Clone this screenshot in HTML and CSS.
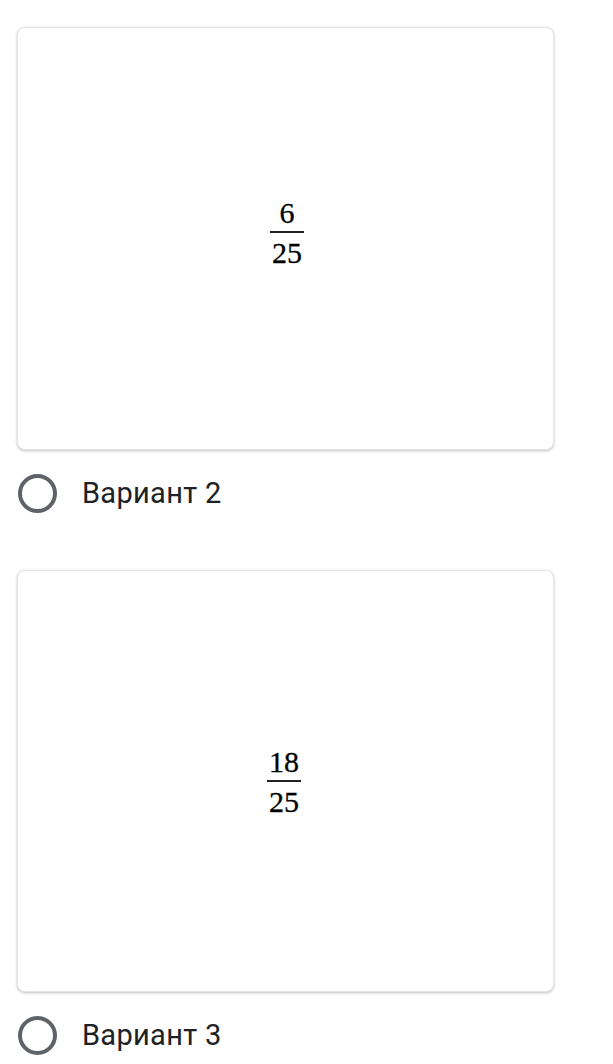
FILE: index.html
```html
<!DOCTYPE html>
<html lang="ru">
<head>
    <meta charset="UTF-8">
    <meta name="viewport" content="width=device-width, initial-scale=1.0">
    <title>Варианты</title>
    <link rel="stylesheet" href="styles.css">
</head>
<body>

    <div class="options">
        <!-- Option 2 -->
        <div class="option">
            <div class="card card-first">
                <div class="frac">
                    <span class="num">6</span>
                    <span class="den">25</span>
                </div>
            </div>
            <label class="choice">
                <span class="radio"></span>
                <span class="choice-text">Вариант 2</span>
            </label>
        </div>

        <!-- Option 3 -->
        <div class="option">
            <div class="card card-second">
                <div class="frac">
                    <span class="num">18</span>
                    <span class="den">25</span>
                </div>
            </div>
            <label class="choice">
                <span class="radio"></span>
                <span class="choice-text">Вариант 3</span>
            </label>
        </div>
    </div>

</body>
</html>
```

FILE: styles.css
```css
body {
    margin: 0;
    padding: 0;
    background: #ffffff;
    font-family: 'Roboto', 'Liberation Sans', sans-serif;
    color: #202124;
}
.options {
    padding: 27px 0 0 17px;
    width: 537px;
}
.option {
    margin-bottom: 58px;
}
.card {
    box-sizing: border-box;
    height: 423px;
    background: #fff;
    border: 1px solid #e6e6e6;
    border-radius: 8px;
    box-shadow: 0 1px 3px rgba(0, 0, 0, 0.25);
    display: flex;
    justify-content: center;
    align-items: center;
}
.card-first .frac {
    margin-top: -12px;
    margin-left: 3px;
}
.card-second {
    height: 422px;
}
.card-second .frac {
    margin-left: -3px;
}
.frac {
    display: inline-flex;
    flex-direction: column;
    align-items: center;
    font-family: 'Liberation Serif', serif;
    font-size: 30px;
    line-height: 27px;
    color: #000;
    -webkit-text-stroke: 0.3px #000;
}
.num {
    padding: 0 2px 5px;
}
.den {
    border-top: 2px solid #222;
    padding: 6px 2px 0;
}
.choice {
    display: flex;
    align-items: center;
    margin-top: 24px;
    height: 38px;
}
.radio {
    box-sizing: border-box;
    width: 39px;
    height: 39px;
    border: 4px solid #5f6368;
    border-radius: 50%;
    margin-left: 1px;
}
.choice-text {
    margin-left: 25px;
    font-size: 29px;
    letter-spacing: 0.3px;
    color: #202124;
}
```
